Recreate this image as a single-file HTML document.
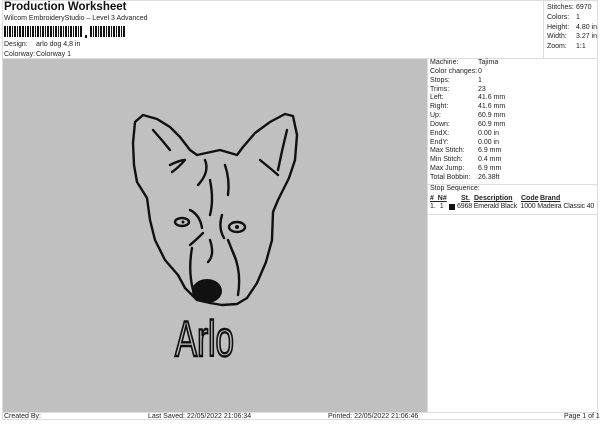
<!DOCTYPE html>
<html><head><style>
body{margin:0;width:600px;height:424px;background:#fff;font-family:"Liberation Sans",sans-serif;color:#222;position:relative;overflow:hidden}
.a{position:absolute;white-space:nowrap}
.s{font-size:7px}
</style></head><body>
<div style="position:absolute;left:2px;top:0;width:596px;height:420px;border:1px solid #ddd;box-sizing:border-box"></div>
<div class="a" style="left:4px;top:1px;font-size:11.5px;font-weight:bold;color:#111">Production Worksheet</div>
<div class="a s" style="left:4px;top:15px">Wilcom EmbroideryStudio – Level 3 Advanced</div>
<svg class="a" style="left:4px;top:26px" width="122" height="12">
<g fill="#111">
<rect x="0" y="0" width="2" height="11"/><rect x="3" y="0" width="1" height="11"/><rect x="5" y="0" width="2" height="11"/><rect x="8" y="0" width="1" height="11"/><rect x="10" y="0" width="2" height="11"/><rect x="13" y="0" width="1" height="11"/><rect x="15" y="0" width="2" height="11"/><rect x="18" y="0" width="2" height="11"/><rect x="21" y="0" width="1" height="11"/><rect x="23" y="0" width="2" height="11"/><rect x="26" y="0" width="1" height="11"/><rect x="28" y="0" width="2" height="11"/><rect x="31" y="0" width="1" height="11"/><rect x="33" y="0" width="2" height="11"/><rect x="36" y="0" width="1" height="11"/><rect x="38" y="0" width="2" height="11"/><rect x="41" y="0" width="1" height="11"/><rect x="43" y="0" width="2" height="11"/><rect x="46" y="0" width="2" height="11"/><rect x="49" y="0" width="1" height="11"/><rect x="51" y="0" width="2" height="11"/><rect x="54" y="0" width="1" height="11"/><rect x="56" y="0" width="2" height="11"/><rect x="59" y="0" width="1" height="11"/><rect x="61" y="0" width="2" height="11"/><rect x="64" y="0" width="1" height="11"/><rect x="66" y="0" width="2" height="11"/><rect x="69" y="0" width="1" height="11"/><rect x="71" y="0" width="2" height="11"/><rect x="74" y="0" width="1" height="11"/><rect x="76" y="0" width="2" height="11"/>
<rect x="81" y="9" width="2" height="3"/>
<rect x="86" y="0" width="2" height="11"/><rect x="89" y="0" width="1" height="11"/><rect x="91" y="0" width="2" height="11"/><rect x="94" y="0" width="1" height="11"/><rect x="96" y="0" width="2" height="11"/><rect x="99" y="0" width="2" height="11"/><rect x="102" y="0" width="1" height="11"/><rect x="104" y="0" width="2" height="11"/><rect x="107" y="0" width="1" height="11"/><rect x="109" y="0" width="2" height="11"/><rect x="112" y="0" width="1" height="11"/><rect x="114" y="0" width="2" height="11"/><rect x="117" y="0" width="1" height="11"/><rect x="119" y="0" width="2" height="11"/>
</g></svg>
<div class="a s" style="left:4px;top:41px">Design:</div><div class="a s" style="left:36px;top:41px">arlo dog 4,8 in</div>
<div class="a s" style="left:4px;top:51px">Colorway:</div><div class="a s" style="left:36px;top:51px">Colorway 1</div>
<div style="position:absolute;left:543px;top:0;width:1px;height:58px;background:#ddd"></div>
<div class="a s" style="left:547px;top:3px;line-height:9.8px">Stitches:<br>Colors:<br>Height:<br>Width:<br>Zoom:</div>
<div class="a s" style="left:576px;top:3px;line-height:9.8px">6970<br>1<br>4.80 in<br>3.27 in<br>1:1</div>
<div style="position:absolute;left:2px;top:58px;width:596px;height:1px;background:#ddd"></div>
<div style="position:absolute;left:3px;top:59px;width:424px;height:353px;background:#c0c0c0"></div>
<div style="position:absolute;left:427px;top:59px;width:1px;height:353px;background:#ddd"></div>
<div class="a s" style="left:430px;top:59px;line-height:8.85px">Machine:<br>Color changes:<br>Stops:<br>Trims:<br>Left:<br>Right:<br>Up:<br>Down:<br>EndX:<br>EndY:<br>Max Stitch:<br>Min Stitch:<br>Max Jump:<br>Total Bobbin:</div>
<div class="a s" style="left:478px;top:59px;line-height:8.85px">Tajima<br>0<br>1<br>23<br>41.6 mm<br>41.6 mm<br>60.9 mm<br>60.9 mm<br>0.00 in<br>0.00 in<br>6.9 mm<br>0.4 mm<br>6.9 mm<br>26.38ft</div>
<div style="position:absolute;left:428px;top:184px;width:170px;height:1px;background:#ddd"></div>
<div class="a s" style="left:430px;top:185px">Stop Sequence:</div>
<div class="a s" style="left:430px;top:195px;font-weight:bold;text-decoration:underline">#&nbsp; N#</div>
<div class="a s" style="left:461px;top:195px;font-weight:bold;text-decoration:underline">St.</div>
<div class="a s" style="left:474px;top:195px;font-weight:bold;text-decoration:underline">Description</div>
<div class="a s" style="left:521px;top:195px;font-weight:bold;text-decoration:underline">Code</div>
<div class="a s" style="left:540px;top:195px;font-weight:bold;text-decoration:underline">Brand</div>
<div class="a s" style="left:430px;top:203px">1.&nbsp; 1</div>
<div style="position:absolute;left:449px;top:204px;width:6px;height:6px;background:#111"></div>
<div class="a s" style="left:457px;top:203px;letter-spacing:-0.15px">6968&nbsp;Emerald Black&nbsp; 1000&nbsp;Madeira Classic 40</div>
<div style="position:absolute;left:428px;top:214px;width:170px;height:1px;background:#ddd"></div>
<div style="position:absolute;left:2px;top:412px;width:596px;height:1px;background:#ddd"></div>
<div class="a s" style="left:4px;top:413px">Created By:</div>
<div class="a s" style="left:148px;top:413px">Last Saved: 22/05/2022 21:06:34</div>
<div class="a s" style="left:328px;top:413px">Printed: 22/05/2022 21:06:46</div>
<div class="a s" style="left:564px;top:413px">Page 1 of 1</div>
<svg class="a" style="left:0;top:0" width="600" height="424">
<g fill="none" stroke="#111" stroke-width="2.4" stroke-linejoin="round" stroke-linecap="round">
<path d="M147,198 L137,182 L134,165 L133,143 L135,122 L143,115 L157,119 L170,127 L180,137 L190,150 L197,155 L220,150 L237,155 L243,147 L255,133 L270,122 L285,114 L293,116 L297,135 L295,160 L289,178 L278,200 L273,212 L272,240 L266,262 L257,283 L247,298 L237,304 L222,305 L210,303 L197,300 L185,288 L178,275 L165,260 L155,240 L150,220 Z"/>
<path d="M153,130 Q162,140 170,150"/><path d="M170,165 Q180,160 185,160 Q178,168 172,172"/>
<path d="M287,130 Q282,150 278,170"/><path d="M260,160 Q270,168 278,175"/>
<path d="M205,160 Q210,172 198,185"/><path d="M210,180 Q214,200 210,215"/><path d="M225,165 Q230,180 228,195"/>
<path d="M190,210 Q200,215 202,228 M203,233 Q196,240 190,245"/>
<path d="M222,215 Q218,228 224,238 M228,240 Q232,250 236,260"/>
<path d="M192,248 Q188,270 193,290"/><path d="M232,250 Q242,270 238,295"/>
<path d="M210,240 Q215,255 208,262"/>
<ellipse cx="182" cy="222" rx="7" ry="4"/><ellipse cx="237" cy="227" rx="8" ry="5"/>
</g>
<ellipse cx="207" cy="291" rx="15" ry="12" fill="#111"/>
<circle cx="183" cy="222" r="1.5" fill="#111"/><circle cx="237" cy="227" r="2" fill="#111"/>
<text x="0" y="0" font-family="Liberation Sans,sans-serif" font-size="46" fill="#c0c0c0" stroke="#111" stroke-width="2.2" transform="translate(175,356) scale(0.72,1.08)">Arlo</text>
</svg>
</body></html>
